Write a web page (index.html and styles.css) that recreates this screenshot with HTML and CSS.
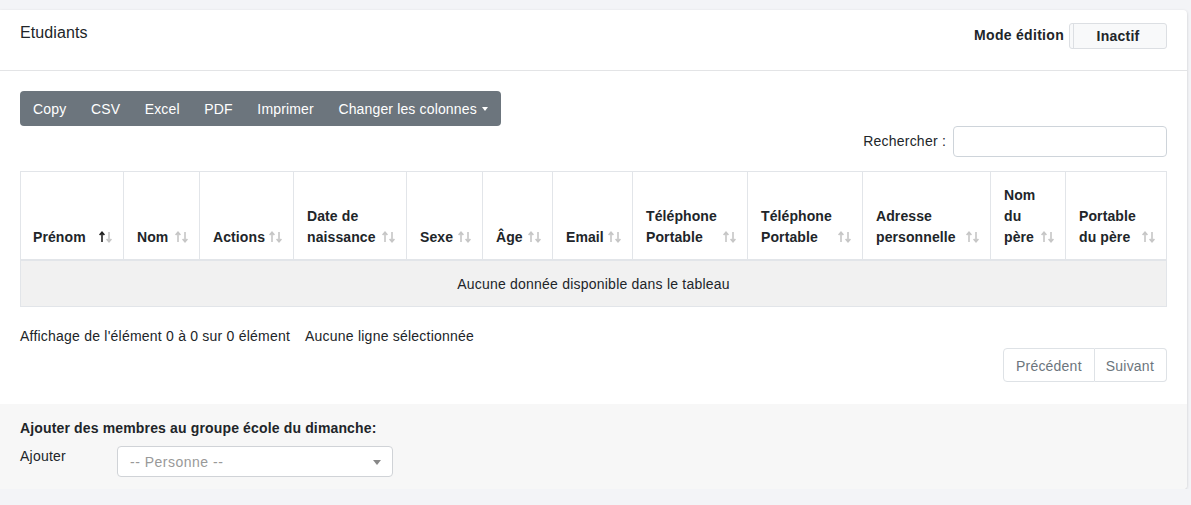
FILE: index.html
```html
<!DOCTYPE html>
<html lang="fr">
<head>
<meta charset="utf-8">
<title>Etudiants</title>
<link rel="stylesheet" href="styles.css">
</head>
<body>
<div class="card">
  <div class="card-header">
    <div class="card-title">Etudiants</div>
    <div class="edit-mode">
      <span class="edit-label">Mode édition</span>
      <span class="toggle"><span class="toggle-handle"></span><span class="toggle-text">Inactif</span></span>
    </div>
  </div>
  <div class="card-body">
    <div class="btn-group">
      <span class="btn">Copy</span>
      <span class="btn">CSV</span>
      <span class="btn">Excel</span>
      <span class="btn">PDF</span>
      <span class="btn">Imprimer</span>
      <span class="btn dropdown">Changer les colonnes</span>
    </div>
    <div class="search-row">
      <label class="search-label">Rechercher :</label>
      <span class="search-input"></span>
    </div>
    <table class="data-table">
      <colgroup>
        <col style="width:103px"><col style="width:76px"><col style="width:94px"><col style="width:113px">
        <col style="width:76px"><col style="width:70px"><col style="width:80px"><col style="width:115px">
        <col style="width:115px"><col style="width:128px"><col style="width:75px"><col style="width:101px">
      </colgroup>
      <thead>
        <tr>
          <th class="sorted">Prénom<i class="sort"></i></th>
          <th>Nom<i class="sort"></i></th>
          <th>Actions<i class="sort"></i></th>
          <th>Date de naissance<i class="sort"></i></th>
          <th>Sexe<i class="sort"></i></th>
          <th>Âge<i class="sort"></i></th>
          <th>Email<i class="sort"></i></th>
          <th>Téléphone Portable<i class="sort"></i></th>
          <th>Téléphone Portable<i class="sort"></i></th>
          <th>Adresse personnelle<i class="sort"></i></th>
          <th>Nom du père<i class="sort"></i></th>
          <th>Portable du père<i class="sort"></i></th>
        </tr>
      </thead>
      <tbody>
        <tr><td colspan="12" class="empty">Aucune donnée disponible dans le tableau</td></tr>
      </tbody>
    </table>
    <div class="info">
      <span>Affichage de l'élément 0 à 0 sur 0 élément</span>
      <span class="select-info">Aucune ligne sélectionnée</span>
    </div>
    <div class="pager">
      <span class="page-btn">Précédent</span><span class="page-btn">Suivant</span>
    </div>
  </div>
  <div class="card-footer">
    <div class="footer-title">Ajouter des membres au groupe école du dimanche:</div>
    <div class="add-row">
      <span class="add-label">Ajouter</span>
      <span class="select"><span class="placeholder">-- Personne --</span><span class="select-arrow"></span></span>
    </div>
  </div>
</div>
</body>
</html>
```

FILE: styles.css
```css
* { box-sizing: border-box; }
html, body { margin: 0; padding: 0; }
body {
  background: #f3f4f7;
  font-family: "Liberation Sans", Arial, Helvetica, sans-serif;
  font-size: 14px;
  line-height: 21px;
  letter-spacing: 0.22px;
  color: #212529;
  padding: 10px 4px 0 0;
}
.card {
  background: #fff;
  border-radius: 0 4px 4px 0;
  box-shadow: 0 1px 3px rgba(0,0,0,0.18);
  overflow: hidden;
}
.card-header {
  display: flex;
  justify-content: space-between;
  align-items: flex-start;
  height: 61px;
  padding: 12px 20px 0 20px;
  border-bottom: 1px solid #e3e4e6;
}
.card-title { font-size: 16px; line-height: 21px; letter-spacing: 0.1px; }
.edit-mode {
  display: flex;
  align-items: center;
  margin-top: 1px;
}
.edit-label { font-weight: bold; margin-right: 5px; margin-top: -2px; letter-spacing: 0.3px; }
.toggle {
  display: flex;
  width: 98px;
  height: 26px;
  background: #f8f9fa;
  border: 1px solid #dcdfe3;
  border-radius: 3px;
}
.toggle-handle { width: 4px; border-right: 1px solid #dcdfe3; }
.toggle-text { flex: 1; text-align: center; font-weight: bold; line-height: 24px; padding-right: 4px; }

.card-body { padding: 20px 20px 22px 20px; }
.btn-group {
  display: inline-flex;
  background: #6c757d;
  border-radius: 4px;
  height: 35px;
  width: 481px;
}
.btn {
  color: #fff;
  padding: 8px 12.3px 6px 12.3px;
  line-height: 21px;
  letter-spacing: 0.15px;
}
.btn:first-child { padding-left: 13px; }
.dropdown::after {
  content: "";
  display: inline-block;
  margin-left: 5px;
  vertical-align: 3px;
  border-top: 4px solid #fff;
  border-left: 3.5px solid transparent;
  border-right: 3.5px solid transparent;
}
.search-row {
  display: flex;
  justify-content: flex-end;
  align-items: center;
  height: 30px;
}
.search-label { margin-right: 7px; }
.search-input {
  width: 214px;
  height: 31px;
  border: 1px solid #ced4da;
  border-radius: 4px;
}
.data-table {
  margin-top: 15px;
  width: 1146px;
  table-layout: fixed;
  border-collapse: collapse;
}
.data-table th {
  position: relative;
  text-align: left;
  vertical-align: bottom;
  font-weight: bold;
  letter-spacing: 0.1px;
  padding: 13px 28px 11px 13px;
  border: 1px solid #e2e5e9;
  border-bottom: 2px solid #e2e5e9;
  line-height: 21px;
}
.data-table th:first-child { padding-left: 12px; }
.sort {
  position: absolute;
  right: 11px;
  bottom: 16px;
  width: 13px;
  height: 12px;
}
.sort::before, .sort::after {
  content: "";
  position: absolute;
  top: 0;
  width: 6px;
  height: 12px;
  background-repeat: no-repeat;
}
.sort::before {
  left: 0;
  background-image: url("data:image/svg+xml;utf8,<svg xmlns='http://www.w3.org/2000/svg' width='6' height='12' viewBox='0 0 6 12'><path d='M3 11V1.5M0.6 4L3 1.3L5.4 4' fill='none' stroke='%23c6c6c6' stroke-width='1.6'/></svg>");
}
.sort::after {
  left: 6.5px;
  background-image: url("data:image/svg+xml;utf8,<svg xmlns='http://www.w3.org/2000/svg' width='6' height='12' viewBox='0 0 6 12'><path d='M3 1V10.5M0.6 8L3 10.7L5.4 8' fill='none' stroke='%23c6c6c6' stroke-width='1.6'/></svg>");
}
.sorted .sort::before {
  background-image: url("data:image/svg+xml;utf8,<svg xmlns='http://www.w3.org/2000/svg' width='6' height='12' viewBox='0 0 6 12'><path d='M3 11V1.5M0.6 4L3 1.3L5.4 4' fill='none' stroke='%23222' stroke-width='1.6'/></svg>");
}
.data-table td {
  border: 1px solid #e2e5e9;
}
.empty {
  background: #f1f1f1;
  text-align: center;
  line-height: 21px;
  padding: 13px 12px 11px 12px;
}
.info {
  margin-top: 19px;
  display: flex;
}
.select-info { margin-left: 15px; }
.pager {
  display: flex;
  justify-content: flex-end;
  margin-top: 1px;
}
.page-btn {
  color: #6c757d;
  border: 1px solid #dee2e6;
  padding: 7px 12px 5px 12px;
  line-height: 20px;
  height: 34px;
}
.page-btn:first-child { border-radius: 4px 0 0 4px; }
.page-btn:last-child { border-left: none; border-radius: 0 4px 4px 0; padding: 7px 12px 5px 11px; }

.card-footer {
  background: #f7f7f7;
  padding: 14px 20px 12px 20px;
}
.footer-title { font-weight: bold; letter-spacing: 0.15px; }
.add-row {
  display: flex;
  align-items: flex-start;
  margin-top: 7px;
}
.add-label { width: 97px; line-height: 21px; }
.select {
  position: relative;
  width: 276px;
  height: 31px;
  background: #fff;
  border: 1px solid #d0d3d7;
  border-radius: 4px;
  padding: 5px 12px 3px 12px;
}
.placeholder { color: #999; line-height: 21px; letter-spacing: 0.5px; }
.select-arrow {
  position: absolute;
  right: 11px;
  top: 13px;
  border-top: 5px solid #888;
  border-left: 4px solid transparent;
  border-right: 4px solid transparent;
}
```
